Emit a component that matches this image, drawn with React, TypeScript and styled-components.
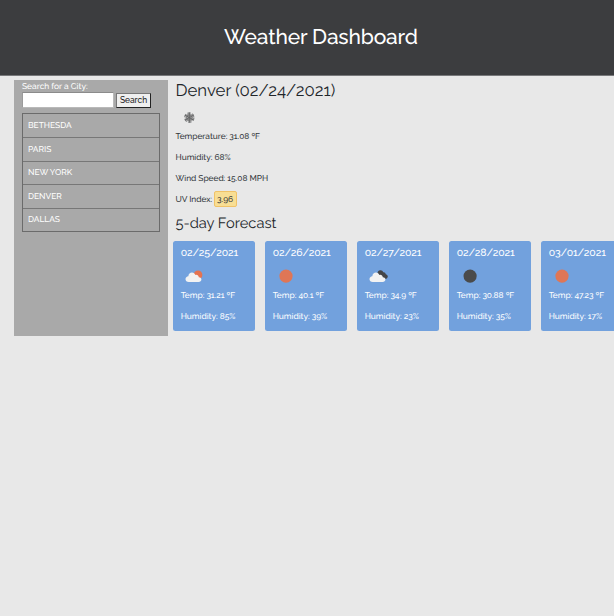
import React from "react";
import styled, { createGlobalStyle, css } from "styled-components";

const GlobalStyle = createGlobalStyle`
  *, *::before, *::after { box-sizing: border-box; }
  body {
    margin: 0;
    background: #e8e8e8;
    color: #212529;
    font-family: Raleway, Lato, sans-serif;
    font-size: 8.4px;
    font-weight: 500;
    text-rendering: geometricPrecision;
    overflow: hidden;
  }
`;

const Page = styled.div`
  width: 100%;
  height: 616px;
  overflow: hidden;
`;

const Header = styled.header`
  display: flex;
  align-items: center;
  justify-content: center;
  height: 76px;
  padding: 0 0 2px 28px;
  background: #3c3d3f;
  border-bottom: 1px solid #77787a;
`;

const Title = styled.h1`
  margin: 0;
  color: #fff;
  font-size: 21px;
  font-weight: 500;
  line-height: 26px;
  letter-spacing: -0.15px;
`;

const Columns = styled.div`
  display: flex;
  align-items: flex-start;
  padding: 4px 0 0 14px;
`;

const Sidebar = styled.aside`
  flex: none;
  width: 154px;
  height: 256px;
  padding: 0 8px;
  background: #a9a9a9;
  color: #fff;
`;

const SearchForm = styled.form`
  display: flex;
  flex-wrap: wrap;
  gap: 0 2px;
`;

const Label = styled.label`
  width: 100%;
  height: 12px;
  line-height: 12px;
`;

const SearchInput = styled.input`
  width: 92px;
  height: 16px;
  padding: 0 2px;
  border: 1px solid;
  border-color: #8b8b8b #b9b9b9 #b9b9b9 #9b9b9b;
  background: #fff;
  font: inherit;
  outline: none;
`;

const SearchButton = styled.button`
  width: 35px;
  height: 15px;
  margin-top: 1px;
  padding: 0 0 1px;
  border: 1px solid;
  border-color: #777 #222 #222 #777;
  background: #efefef;
  color: #222;
  font: inherit;
  line-height: 12px;
`;

const CityList = styled.ul`
  display: grid;
  grid-template-rows: repeat(5, 1fr);
  width: 138px;
  height: 119px;
  margin: 5px 0 0;
  padding: 0;
  border: 1px solid #6b6b6b;
  list-style: none;
`;

const City = styled.li`
  display: flex;
  align-items: center;
  padding: 0 0 1px 5px;
  & + & {
    border-top: 1px solid #777;
  }
`;

const Main = styled.main`
  flex: none;
  width: 460px;
  padding-left: 5px;
`;

const Current = styled.section`
  padding-left: 2.5px;
`;

const CityHeading = styled.h2`
  margin: 0;
  font-size: 16.8px;
  font-weight: 400;
  line-height: 20px;
`;

const CurrentIcon = styled.div`
  display: flex;
  align-items: center;
  height: 25.5px;
  padding: 10px 0 0 8px;
`;

const Reading = styled.p<{ $onCard?: boolean }>`
  display: flex;
  align-items: center;
  height: 21px;
  margin: 0;
  color: ${(p) => (p.$onCard ? "#fff" : "#34383c")};
  letter-spacing: -0.04px;
`;

const UvBadge = styled.span`
  display: flex;
  align-items: center;
  justify-content: center;
  width: 23px;
  height: 16px;
  margin-left: 1.4px;
  border: 1px solid #f0c267;
  border-radius: 2px;
  background: #f8de94;
`;

const ForecastHeading = styled.h3`
  margin: 4px 0 0;
  font-size: 14.7px;
  font-weight: 400;
  line-height: 20px;
`;

const Cards = styled.div`
  display: flex;
  gap: 10.5px;
  margin-top: 7px;
`;

const Card = styled.article`
  flex: none;
  width: 81.5px;
  height: 90px;
  padding: 3px 0 0 7.7px;
  border-radius: 2.5px;
  background: #72a1dd;
  color: #fff;
`;

const CardDate = styled.h4`
  margin: 0;
  font-size: 10.5px;
  font-weight: 500;
  line-height: 19px;
  letter-spacing: -0.12px;
`;

const CardIcon = styled.div`
  height: 22px;
  padding-top: 1px;
`;

const icon = css`
  display: block;
  flex: none;
`;

const SmallSvg = styled.svg`
  ${icon}
  width: 12px;
  height: 12px;
`;

const WeatherSvg = styled.svg`
  ${icon}
  width: 26px;
  height: 24px;
`;

type Sky = "cloudSun" | "sun" | "brokenClouds" | "night";

const cloud = "M7.8 17.9C5.8 17.9 4.5 16.8 4.5 15.2C4.5 13.5 5.8 12.4 7.3 12.2C7.7 9.7 9 8.5 11 8.5C12.7 8.5 13.8 9.5 14.3 10.9C16.4 10.4 17.6 11.7 17.8 13.3C19.7 13.4 20.4 14.4 20.4 15.6C20.4 17 19.2 17.9 17.6 17.9Z";

function WeatherIcon({ sky }: { sky: Sky }) {
  return (
    <WeatherSvg viewBox="0 0 26 24">
      {sky === "sun" && <circle cx="13" cy="12.1" r="6.6" fill="#df7656" />}
      {sky === "night" && <circle cx="13.1" cy="12.1" r="6.6" fill="#4a4a4a" />}
      {sky === "cloudSun" && <circle cx="17" cy="10.9" r="4.4" fill="#e57350" />}
      {sky === "brokenClouds" && (
        <path d="M12.5 9C12.8 7 14 6.1 15.5 6.3C17 6.3 17.8 7.2 18.3 8.3C19.8 8.2 20.5 9.1 20.8 10.2C22.4 10.8 23.1 11.7 22.7 13C22.3 14.5 21.3 14.9 19.7 14.8L14 12Z" fill="#444547" />
      )}
      {(sky === "cloudSun" || sky === "brokenClouds") && <path d={cloud} fill="#f2f2f2" />}
    </WeatherSvg>
  );
}

function SnowIcon() {
  return (
    <SmallSvg viewBox="0 0 12 12">
      <circle cx="5.3" cy="5.6" r="4.6" fill="none" stroke="#858687" strokeWidth="1.3" strokeDasharray="3.3 1.5" />
      <circle cx="5.3" cy="5.6" r="4" fill="#a2a2a2" />
      <path d="M5.3 0.6V10.6M1 3.1L9.6 8.1M1 8.1L9.6 3.1" stroke="#626364" strokeWidth="1" fill="none" />
      <circle cx="5.3" cy="5.6" r="2.7" fill="none" stroke="#6e6f70" strokeWidth="0.8" />
    </SmallSvg>
  );
}

const cities = ["BETHESDA", "PARIS", "NEW YORK", "DENVER", "DALLAS"];

const forecast: { date: string; sky: Sky; temp: string; humidity: number }[] = [
  { date: "02/25/2021", sky: "cloudSun", temp: "31.21", humidity: 85 },
  { date: "02/26/2021", sky: "sun", temp: "40.1", humidity: 39 },
  { date: "02/27/2021", sky: "brokenClouds", temp: "34.9", humidity: 23 },
  { date: "02/28/2021", sky: "night", temp: "30.88", humidity: 35 },
  { date: "03/01/2021", sky: "sun", temp: "47.23", humidity: 17 },
];

export default function App() {
  return (
    <Page>
      <GlobalStyle />
      <Header>
        <Title>Weather Dashboard</Title>
      </Header>
      <Columns>
        <Sidebar>
          <SearchForm onSubmit={(e) => e.preventDefault()}>
            <Label htmlFor="city">Search for a City:</Label>
            <SearchInput id="city" />
            <SearchButton type="submit">Search</SearchButton>
          </SearchForm>
          <CityList>
            {cities.map((name) => (
              <City key={name}>{name}</City>
            ))}
          </CityList>
        </Sidebar>
        <Main>
          <Current>
            <CityHeading>Denver (02/24/2021)</CityHeading>
            <CurrentIcon>
              <SnowIcon />
            </CurrentIcon>
            <Reading>Temperature: 31.08 ºF</Reading>
            <Reading>Humidity: 68%</Reading>
            <Reading>Wind Speed: 15.08 MPH</Reading>
            <Reading>
              UV Index: <UvBadge>3.96</UvBadge>
            </Reading>
            <ForecastHeading>5-day Forecast</ForecastHeading>
          </Current>
          <Cards>
            {forecast.map((day) => (
              <Card key={day.date}>
                <CardDate>{day.date}</CardDate>
                <CardIcon>
                  <WeatherIcon sky={day.sky} />
                </CardIcon>
                <Reading $onCard>Temp: {day.temp} ºF</Reading>
                <Reading $onCard>Humidity: {day.humidity}%</Reading>
              </Card>
            ))}
          </Cards>
        </Main>
      </Columns>
    </Page>
  );
}
